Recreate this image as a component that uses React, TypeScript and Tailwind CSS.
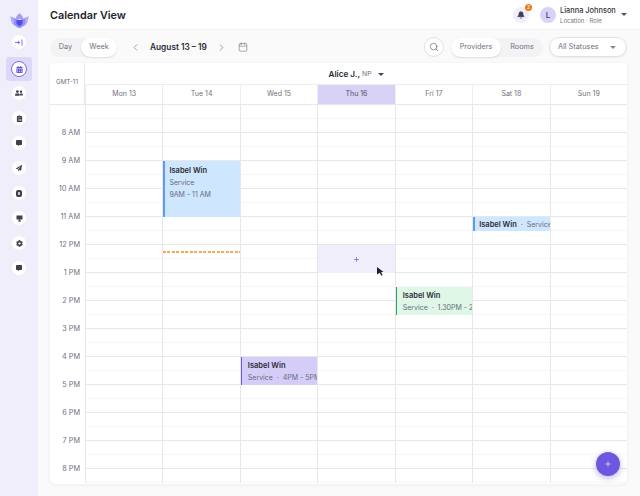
import { Bell, Calendar, ChevronLeft, ChevronRight, Plus, Search } from "lucide-react";
import { FaCog, FaCommentAlt, FaPaperPlane, FaUserFriends, FaClipboardList, FaCalendarAlt } from "react-icons/fa";
import { ReactNode } from "react";

const days = ["Mon 13", "Tue 14", "Wed 15", "Thu 16", "Fri 17", "Sat 18", "Sun 19"];
const hours = ["8 AM", "9 AM", "10 AM", "11 AM", "12 PM", "1 PM", "2 PM", "3 PM", "4 PM", "5 PM", "6 PM", "7 PM", "8 PM"];

function Caret({ className = "" }: { className?: string }) {
  return <div className={`w-0 h-0 border-l-[3px] border-r-[3px] border-t-[3px] border-l-transparent border-r-transparent ${className}`} />;
}

function Logo() {
  return (
    <svg width="19" height="15" viewBox="0 0 19 15">
      <path d="M0.5 3 C2 4 4 4.5 5.5 6 L6 13 C3 13 0.5 9 0.5 3Z" fill="#b3aef7" />
      <path d="M18.5 3 C17 4 15 4.5 13.5 6 L13 13 C16 13 18.5 9 18.5 3Z" fill="#b3aef7" />
      <path d="M9.5 0 C11.5 2 13 3.5 13.5 6 L5.5 6 C6 3.5 7.5 2 9.5 0Z" fill="#a5a0f5" />
      <path d="M3.5 5 L9.5 7 L15.5 5 L15 11 C13 13.5 11 15 9.5 15 C8 15 6 13.5 4 11Z" fill="#9590f3" />
      <path d="M6.5 7 H12.5 V10.5 C11.5 12 10.5 13 9.5 13 C8.5 13 7.5 12 6.5 10.5Z" fill="#4f4de8" />
    </svg>
  );
}

function NavIcon({ children }: { children: ReactNode }) {
  return (
    <div className="w-[14px] h-[14px] rounded-full bg-white flex items-center justify-center text-[#3f3f4d]">
      {children}
    </div>
  );
}

function Sidebar() {
  return (
    <aside className="w-[38px] shrink-0 bg-[#f0eefb] flex flex-col items-center pt-[13px]">
      <Logo />
      <div className="mt-[7px] w-[14px] h-[14px] rounded-full bg-white flex items-center justify-center">
        <svg width="8" height="7" viewBox="0 0 8 7" fill="none" stroke="#6d5fe6" strokeWidth="0.9">
          <path d="M0 3.5H4.6M3 1.8L4.8 3.5L3 5.2M7 0.5V6.5" />
        </svg>
      </div>
      <div className="mt-[8px] w-[26px] h-[24px] rounded-[3px] bg-[#dcd8f8] flex items-center justify-center">
        <div className="w-[16px] h-[16px] rounded-full bg-white border border-[#7c6cf0] flex items-center justify-center text-[#5b4bd8]">
          <FaCalendarAlt size={7} />
        </div>
      </div>
      <div className="mt-[5px] flex flex-col items-center gap-[11px]">
        <NavIcon><FaUserFriends size={8} /></NavIcon>
        <NavIcon><FaClipboardList size={7} /></NavIcon>
        <NavIcon><FaCommentAlt size={6} /></NavIcon>
        <NavIcon><FaPaperPlane size={6} /></NavIcon>
        <NavIcon><div className="w-[6px] h-[7px] rounded-[2px] bg-[#3f3f4d] flex items-center justify-center"><div className="w-[2px] h-[3px] bg-white/70" /></div></NavIcon>
        <NavIcon>
          <svg width="7" height="7" viewBox="0 0 7 7" fill="currentColor"><path d="M0.5 0.5H6.5V4.5H4V5.5H5V6.5H2V5.5H3V4.5H0.5Z" /></svg>
        </NavIcon>
        <NavIcon><FaCog size={7} /></NavIcon>
        <NavIcon><FaCommentAlt size={6} /></NavIcon>
      </div>
    </aside>
  );
}

function Header() {
  return (
    <header className="h-[30px] shrink-0 bg-white flex items-center pl-[12px] pr-[13px] border-b border-[#f3f3f5]">
      <h1 className="mt-[3px] text-[10.8px] font-semibold text-[#23232e]">Calendar View</h1>
      <div className="ml-auto relative w-[16px] h-[16px] rounded-full bg-[#f0eefb] flex items-center justify-center text-[#3f3f4d]">
        <Bell size={8} fill="currentColor" />
        <div className="absolute -top-[3px] -right-[3px] w-[7px] h-[7px] rounded-full bg-[#ea7a12] text-white text-[5px] leading-[7px] text-center">2</div>
      </div>
      <div className="ml-[11px] w-[16px] h-[16px] rounded-full bg-[#d8d2f7] flex items-center justify-center text-[8px] font-medium text-[#3f3f4d]">L</div>
      <div className="ml-[4px] mt-[1px] w-[55px] flex flex-col whitespace-nowrap">
        <span className="text-[7.4px] leading-[10px] font-medium text-[#33333f]">Lianna Johnson</span>
        <span className="text-[6px] leading-[9px] text-[#777784]">Location · Role</span>
      </div>
      <Caret className="ml-[6px] border-t-[#55555f]" />
    </header>
  );
}

function Toolbar() {
  return (
    <div className="h-[33px] shrink-0 pt-[1px] flex items-center text-[7.3px] text-[#70707c]">
      <div className="h-[19px] w-[67px] rounded-full bg-[#f3f3f5] flex items-center">
        <span className="w-[31px] text-center">Day</span>
        <span className="w-[36px] h-[19px] rounded-full bg-white shadow-[0_1px_2px_rgba(0,0,0,0.12)] flex items-center justify-center">Week</span>
      </div>
      <ChevronLeft size={11} strokeWidth={1.4} className="ml-[13px]" />
      <span className="ml-[9px] text-[8.3px] font-semibold text-[#2b2b36] whitespace-nowrap w-[59px]">August 13 – 19</span>
      <ChevronRight size={11} strokeWidth={1.4} className="ml-[7px]" />
      <Calendar size={10} strokeWidth={1.4} className="ml-[11px]" />
      <div className="ml-auto w-[20px] h-[20px] rounded-full bg-white border border-[#e2e2e6] flex items-center justify-center text-[#55555f]">
        <Search size={10} strokeWidth={1.4} />
      </div>
      <div className="ml-[7px] h-[19px] w-[92px] rounded-full bg-[#f3f3f5] flex items-center">
        <span className="w-[50px] h-[19px] rounded-full bg-white shadow-[0_1px_2px_rgba(0,0,0,0.12)] flex items-center justify-center">Providers</span>
        <span className="w-[42px] text-center">Rooms</span>
      </div>
      <div className="ml-[6px] h-[20px] w-[78px] rounded-full bg-white border border-[#e2e2e6] shadow-[0_1px_2px_rgba(0,0,0,0.06)] flex items-center px-[8px] justify-between">
        <span>All Statuses</span>
        <Caret className="mr-[2px] border-t-[#888892]" />
      </div>
    </div>
  );
}

function EventBlock({ top, height, color, children }: { top: number; height: number; color: string; children: ReactNode }) {
  return (
    <div className={`absolute left-0 right-0 overflow-hidden whitespace-nowrap text-[7px] text-[#666b7c] ${color}`} style={{ top, height }}>
      {children}
    </div>
  );
}

function DayColumn({ index }: { index: number }) {
  return (
    <div className="relative border-l border-[#e8e8ec]">
      {Array.from({ length: 27 }).map((_, i) => (
        <div key={i} className={`h-[14px] border-b ${i % 2 === 1 ? "border-[#e8e8ec]" : "border-[#f6f6f8]"}`} />
      ))}
      {index === 1 && (
        <>
          <EventBlock top={56} height={56} color="bg-[#cfe6ff] border-l-2 border-[#5b9cf0]">
            <div className="pl-[4px] pt-[4px] leading-[12px]">
              <div className="text-[7.5px] font-semibold text-[#2b2b36]">Isabel Win</div>
              <div>Service</div>
              <div>9AM - 11 AM</div>
            </div>
          </EventBlock>
          <div className="absolute left-0 right-0 top-[146px] h-[2px] bg-[repeating-linear-gradient(90deg,#f7a955_0_3px,transparent_3px_4.5px)]" />
        </>
      )}
      {index === 2 && (
        <EventBlock top={252} height={28} color="bg-[#d5cdf8] border-l border-[#6b57e0]">
          <div className="pl-[6px] pt-[3px] leading-[12px]">
            <div className="text-[7.5px] font-semibold text-[#2b2b36]">Isabel Win</div>
            <div>Service&nbsp; · &nbsp;4PM - 5PM</div>
          </div>
        </EventBlock>
      )}
      {index === 3 && (
        <div className="absolute left-0 right-0 top-[140px] h-[28px] bg-[#f0eefb] flex items-center justify-center text-[#8474f0]">
          <Plus size={7} strokeWidth={3} />
          <svg className="absolute left-[59px] top-[22px]" width="7" height="9" viewBox="0 0 7 9" fill="#1f1f28">
            <path d="M0 0L6.5 5H4L5.5 8L4.2 8.7L2.8 5.7L0 7.5Z" />
          </svg>
        </div>
      )}
      {index === 4 && (
        <EventBlock top={182} height={28} color="bg-[#dff7e6] border-l border-[#2e9e6a]">
          <div className="pl-[6px] pt-[3px] leading-[12px]">
            <div className="text-[7.5px] font-semibold text-[#2b2b36]">Isabel Win</div>
            <div>Service&nbsp; · &nbsp;1.30PM - 2 PM</div>
          </div>
        </EventBlock>
      )}
      {index === 5 && (
        <EventBlock top={112} height={14} color="bg-[#cfe6ff] border-l-2 border-[#5b9cf0]">
          <div className="pl-[4px] leading-[15px]">
            <span className="text-[7.5px] font-semibold text-[#2b2b36]">Isabel Win</span>&nbsp; · &nbsp;Service
          </div>
        </EventBlock>
      )}
    </div>
  );
}

function CalendarCard() {
  return (
    <div className="relative h-[421px] w-[577px] rounded-b-[6px] rounded-t-[4px] bg-white shadow-[0_1px_4px_rgba(0,0,0,0.05)] overflow-hidden">
      <div className="grid grid-cols-[35px_repeat(7,1fr)] grid-rows-[22px_19px] border-b border-[#e8e8ec]">
        <div className="row-span-2 flex items-center justify-center pb-[2px] text-[6.3px] text-[#70707c] border-r border-[#e8e8ec]">GMT-11</div>
        <div className="col-span-7 flex items-center justify-center pt-[1px] border-b border-[#eeeef1]">
          <span className="text-[8.2px] font-semibold text-[#2b2b36]">Alice J.,</span>
          <span className="ml-[2px] text-[6.8px] text-[#70707c]">NP</span>
          <Caret className="ml-[6px] border-t-[#44444e]" />
        </div>
        {days.map((d) => (
          <div key={d} className={`flex items-center justify-center text-[7px] border-l border-[#eeeef1] first:border-l-0 ${d === "Thu 16" ? "bg-[#d8d2f7] text-[#50505c]" : "text-[#70707c]"}`}>
            {d}
          </div>
        ))}
      </div>
      <div className="grid grid-cols-[35px_repeat(7,1fr)]">
        <div className="pt-[14px] flex flex-col">
          {hours.map((h) => (
            <div key={h} className="h-[28px] flex items-center justify-end pr-[5px] text-[7.3px] text-[#70707c]">{h}</div>
          ))}
        </div>
        {days.map((d, i) => (
          <DayColumn key={d} index={i} />
        ))}
      </div>
      <div className="absolute right-[7px] bottom-[8px] w-[24px] h-[24px] rounded-full bg-[#6b57e0] shadow-[0_2px_6px_rgba(60,50,160,0.35)] flex items-center justify-center text-[#d8d2f7]">
        <Plus size={8} strokeWidth={2.5} />
      </div>
    </div>
  );
}

export default function App() {
  return (
    <div className="w-[640px] h-[496px] flex overflow-hidden bg-[#fafafa] font-['Inter',sans-serif]">
      <Sidebar />
      <div className="flex-1 flex flex-col min-w-0">
        <Header />
        <main className="flex-1 pl-[12px] pr-[13px]">
          <Toolbar />
          <CalendarCard />
        </main>
      </div>
    </div>
  );
}
